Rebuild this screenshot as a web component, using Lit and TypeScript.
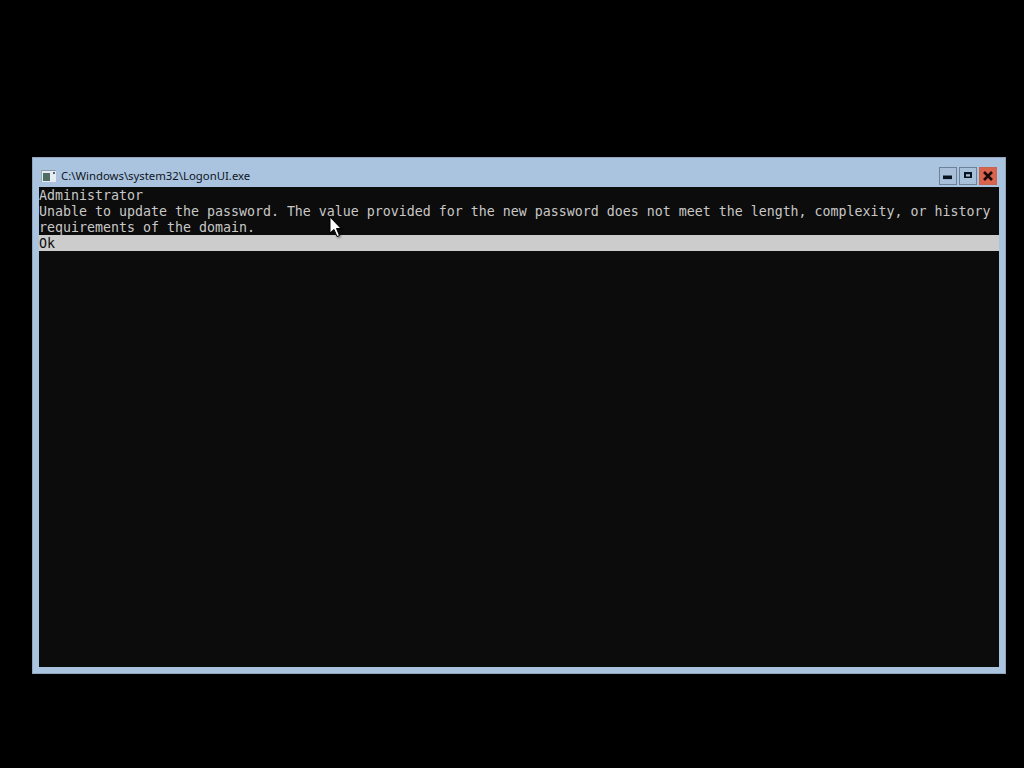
import { LitElement, html, css, svg } from "lit";
import { customElement } from "lit/decorators.js";

@customElement("app-root")
export class AppRoot extends LitElement {
  static styles = css`
    :host { display: block; position: relative; width: 1024px; height: 768px; background: #000; overflow: hidden; }
    .screen { box-sizing: border-box; height: 768px; padding: 157px 18px 94px 32px; }
    .window { box-sizing: border-box; height: 517px; display: flex; flex-direction: column; background: #aac4e0; border: 1px solid #8fa6bf; padding: 0 6px 6px; }
    .titlebar { height: 29px; flex: none; display: flex; align-items: center; padding-left: 2px; padding-top: 7px; box-sizing: border-box; }
    .appicon { width: 15px; height: 12px; flex: none; display: block; margin-right: 5px; }
    .title { flex: 1; font: 11.35px/16px "Noto Sans", "Open Sans", sans-serif; color: #10151c; white-space: nowrap; }
    .controls { display: flex; gap: 2px; padding-right: 2px; }
    .btn { box-sizing: border-box; width: 18px; height: 18px; border: 1px solid #6d8299; display: flex; align-items: center; justify-content: center; background: #a9c0da; }
    .btn.close { background: #d9634c; border-color: #c9624f; }
    .btn svg { display: block; }
    .console { flex: 1; background: #0c0c0c; color: #c8c8c8; font: 13.29px/18px "DejaVu Sans Mono", "Liberation Mono", monospace; }
    .line { height: 16px; white-space: pre; }
    .selected { background: #cccccc; color: #0c0c0c; }
    .cursor { position: absolute; left: 329px; top: 216px; width: 13px; height: 22px; display: block; filter: drop-shadow(1px 1px 1px rgba(0, 0, 0, 0.5)); }
  `;

  render() {
    return html`
      <div class="screen">
        <div class="window">
          <div class="titlebar">
            <svg class="appicon" viewBox="0 0 15 12">
              <rect x="0" y="0" width="15" height="12" fill="#e6ecf2" />
              <rect x="0" y="0" width="15" height="1" fill="#8a9cab" />
              <rect x="0" y="0" width="1" height="12" fill="#97a7b3" />
              <rect x="2" y="3" width="7" height="8" fill="#4d6d65" />
              <rect x="12" y="2" width="2" height="2" fill="#4f6576" />
            </svg>
            <div class="title">C:\\Windows\\system32\\LogonUI.exe</div>
            <div class="controls">
              <div class="btn">
                <svg width="10" height="10" viewBox="0 0 10 10"><rect x="0" y="4.5" width="9" height="3.6" fill="#0a1420" /></svg>
              </div>
              <div class="btn">
                <svg width="10" height="10" viewBox="0 0 10 10"><path fill-rule="evenodd" d="M1 1 H9 V7 H1 Z M3 3.2 V5.4 H7 V3.2 Z" fill="#0a1420" /></svg>
              </div>
              <div class="btn close">
                <svg width="12" height="10" viewBox="0 0 12 10"><path d="M2 1 L10 9 M10 1 L2 9" stroke="#1a0a08" stroke-width="2.6" fill="none" /></svg>
              </div>
            </div>
          </div>
          <div class="console">
            <div class="line">Administrator</div>
            <div class="line">Unable to update the password. The value provided for the new password does not meet the length, complexity, or history</div>
            <div class="line">requirements of the domain.</div>
            <div class="line selected">Ok</div>
          </div>
        </div>
      </div>
      <svg class="cursor" viewBox="0 0 13 22">
        ${svg`<path d="M1 1 L1 17 L5 13.5 L8 20.5 L10.5 19.5 L7.5 12.5 L12 12.5 Z" fill="#fff" stroke="#000" stroke-width="1" />`}
      </svg>
    `;
  }
}
